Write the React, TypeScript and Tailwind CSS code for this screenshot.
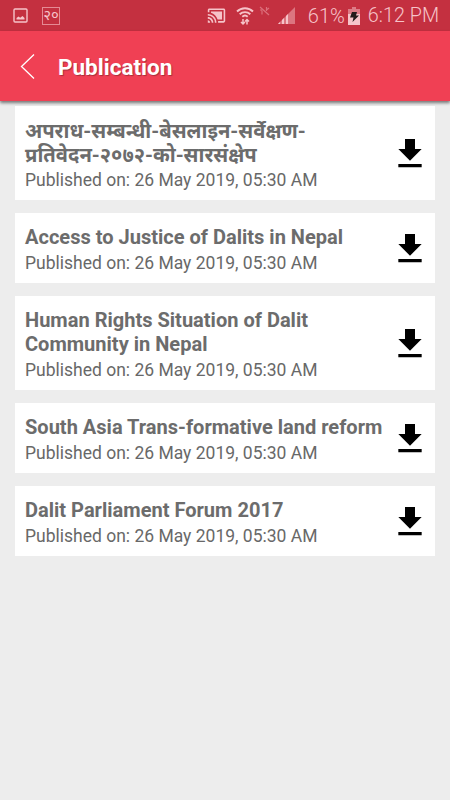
import { MdCastConnected, MdFileDownload } from 'react-icons/md';

interface Publication {
  id: number;
  lines: string[];
  date: string;
  nepali?: boolean;
}

const publications: Publication[] = [
  {
    id: 1,
    lines: ['अपराध-सम्बन्धी-बेसलाइन-सर्वेक्षण-', 'प्रतिवेदन-२०७२-को-सारसंक्षेप'],
    date: '26 May 2019, 05:30 AM',
    nepali: true,
  },
  {
    id: 2,
    lines: ['Access to Justice of Dalits in Nepal'],
    date: '26 May 2019, 05:30 AM',
  },
  {
    id: 3,
    lines: ['Human Rights Situation of Dalit', 'Community in Nepal'],
    date: '26 May 2019, 05:30 AM',
  },
  {
    id: 4,
    lines: ['South Asia Trans-formative land reform'],
    date: '26 May 2019, 05:30 AM',
  },
  {
    id: 5,
    lines: ['Dalit Parliament Forum 2017'],
    date: '26 May 2019, 05:30 AM',
  },
];

function StatusBar() {
  return (
    <div className="flex h-[31px] shrink-0 items-center bg-[#c43040] pl-[13px] pr-[11px] text-[#f6c3c9]">
      <svg className="h-[15px] w-[15px]" viewBox="0 0 15 15" fill="none">
        <rect x="1" y="1" width="13" height="13" rx="1" stroke="currentColor" strokeWidth="1.4" />
        <path d="M3.5 11.5V10l2-1.500 1.700 1.200L9.500 8l2 2v1.500z" fill="currentColor" />
      </svg>
      <div className="ml-[14px] flex h-[18px] w-[18px] items-center justify-center border border-[#e58a94] text-[15px] leading-none">
        २०
      </div>
      <div className="ml-auto flex items-center">
        <MdCastConnected className="mr-[-1px] h-[19px] w-[19px]" />
        <svg className="ml-[11px] h-[20px] w-[18px]" viewBox="0 0 18 20" fill="none">
          <path
            d="M1 5.500a11.500 11.500 0 0 1 16 0M3.700 8.300a7.600 7.600 0 0 1 10.600 0M6.300 10.800a4 4 0 0 1 5.400 0"
            stroke="currentColor"
            strokeWidth="1.900"
          />
          <path d="M7 13v5M5 16l2 2 2-2M11 18.500v-5M9 15.500l2-2 2 2" stroke="currentColor" strokeWidth="1.500" />
        </svg>
        <svg className="mb-[9px] ml-[5px] h-[10px] w-[11px] text-[#dc6f7b]" viewBox="0 0 11 10" fill="none">
          <path d="M1 1l9 8M3 4.500v4M7.500 1v4M1 4h2M7.500 4l2.500-2" stroke="currentColor" strokeWidth="1.200" />
        </svg>
        <svg className="ml-[8px] h-[17px] w-[17px]" viewBox="0 0 17 17">
          <path d="M0 17L17 0v17z" fill="#dc7580" />
          <path d="M0 17l2-2v2zM4 17v-4l2-2v6zM8 17V9l2-2v10z" fill="currentColor" />
        </svg>
        <span className="ml-[13px] w-[37px] text-[20px] font-light leading-none whitespace-nowrap">61%</span>
        <svg className="ml-[3px] h-[18px] w-[12px]" viewBox="0 0 12 18">
          <path d="M4 0h4v2h4v6H0V2h4z" fill="#dd7b86" />
          <path d="M0 7h12v11H0z" fill="currentColor" />
          <path d="M4 5h5L8 8.500h3L4.500 15l1-4.500H2z" fill="#241a1b" />
        </svg>
        <span className="ml-[8px] text-[19.8px] font-light leading-none whitespace-nowrap">6:12 PM</span>
      </div>
    </div>
  );
}

function Header() {
  return (
    <header className="relative flex h-[70px] shrink-0 items-center bg-[#f04054] pl-[20px] shadow-[0_2px_3px_rgba(0,0,0,0.5)]">
      <button type="button" aria-label="Back" className="text-white">
        <svg className="h-[27px] w-[15px]" viewBox="0 0 15 27" fill="none">
          <path d="M14 1.500L1.500 13.500 14 25.500" stroke="currentColor" strokeWidth="1.300" />
        </svg>
      </button>
      <h1 className="ml-[23px] mt-[2px] text-[22.5px] font-bold leading-[26px] text-white [text-shadow:1px_1px_1px_rgba(0,0,0,0.3)]">
        Publication
      </h1>
    </header>
  );
}

function PublicationCard({ item }: { item: Publication }) {
  return (
    <article
      className={`flex justify-between bg-white pl-[10px] pr-[5px] ${item.lines.length > 1 ? 'h-[94px]' : 'h-[70px]'}`}
    >
      <div className="flex flex-col justify-between pb-[9px] pt-[13px]">
        <h2
          className={`font-bold text-[#6c6c6c] ${
            item.nepali ? 'text-[20.2px] leading-[24px]' : 'text-[20.05px] leading-[23.5px]'
          }`}
        >
          {item.lines.map((line) => (
            <span
              key={line}
              className={item.nepali ? 'block h-[24px] whitespace-nowrap' : 'block whitespace-nowrap'}
            >
              {line}
            </span>
          ))}
        </h2>
        <p className="text-[17.5px] leading-[22px] text-[#686868]">Published on: {item.date}</p>
      </div>
      <button type="button" aria-label="Download" className="mt-[2px] self-center text-black">
        <MdFileDownload className="h-10 w-10" />
      </button>
    </article>
  );
}

function App() {
  return (
    <div className="flex h-[800px] w-[450px] flex-col overflow-hidden bg-[#ededed] font-[Roboto,'Noto_Sans',sans-serif]">
      <StatusBar />
      <Header />
      <main className="flex flex-col gap-[13px] px-[15px] pt-[5px]">
        {publications.map((item) => (
          <PublicationCard key={item.id} item={item} />
        ))}
      </main>
    </div>
  );
}

export default App;
